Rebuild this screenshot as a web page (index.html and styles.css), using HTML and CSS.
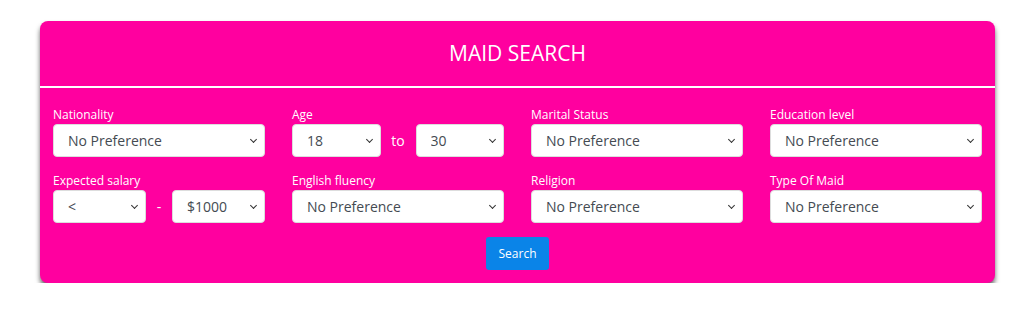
FILE: index.html
```html
<!DOCTYPE html>
<html lang="en">
<head>
    <meta charset="UTF-8">
    <title>Maid Search</title>
    <link rel="stylesheet" href="styles.css">
</head>
<body>
    <div class="search-panel">
        <h1 class="panel-title">MAID SEARCH</h1>
        <form class="search-form">
            <div class="field-grid">
                <!-- Row 1 -->
                <div class="field">
                    <label>Nationality</label>
                    <div class="select-wrap">
                        <select><option>No Preference</option></select>
                    </div>
                </div>
                <div class="field">
                    <label>Age</label>
                    <div class="range">
                        <div class="select-wrap"><select><option>18</option></select></div>
                        <span class="range-sep">to</span>
                        <div class="select-wrap"><select><option>30</option></select></div>
                    </div>
                </div>
                <div class="field">
                    <label>Marital Status</label>
                    <div class="select-wrap">
                        <select><option>No Preference</option></select>
                    </div>
                </div>
                <div class="field">
                    <label>Education level</label>
                    <div class="select-wrap">
                        <select><option>No Preference</option></select>
                    </div>
                </div>
                <!-- Row 2 -->
                <div class="field">
                    <label>Expected salary</label>
                    <div class="range">
                        <div class="select-wrap"><select><option>&lt;</option></select></div>
                        <span class="range-sep dash">-</span>
                        <div class="select-wrap"><select><option>$1000</option></select></div>
                    </div>
                </div>
                <div class="field">
                    <label>English fluency</label>
                    <div class="select-wrap">
                        <select><option>No Preference</option></select>
                    </div>
                </div>
                <div class="field">
                    <label>Religion</label>
                    <div class="select-wrap">
                        <select><option>No Preference</option></select>
                    </div>
                </div>
                <div class="field">
                    <label>Type Of Maid</label>
                    <div class="select-wrap">
                        <select><option>No Preference</option></select>
                    </div>
                </div>
            </div>
            <div class="actions">
                <button type="button" class="search-btn">Search</button>
            </div>
        </form>
    </div>
</body>
</html>
```

FILE: styles.css
```css
/* Page */
body {
    margin: 0;
    padding: 21px 29px 0 40px;
    font-family: "Open Sans", Arial, sans-serif;
    background: #fff;
}
.search-panel {
    width: 955px;
    background-color: #ff009f;
    border-radius: 8px;
    box-shadow: 0 4px 5px rgba(0, 0, 0, 0.6);
    color: #fff;
}
.panel-title {
    margin: 0;
    height: 65px;
    line-height: 64px;
    text-align: center;
    font-size: 21px;
    font-weight: 400;
    border-bottom: 2px solid #fff;
}
.search-form {
    padding: 19px 13px 13px;
}
.field-grid {
    display: grid;
    grid-template-columns: repeat(4, 1fr);
    column-gap: 27px;
    row-gap: 16px;
}
.field label {
    display: block;
    font-size: 12px;
    line-height: 16px;
    margin-bottom: 1px;
}
.select-wrap {
    position: relative;
}
.select-wrap::after {
    content: "";
    position: absolute;
    right: 9px;
    top: 13px;
    width: 4px;
    height: 4px;
    border-right: 1.6px solid #333;
    border-bottom: 1.6px solid #333;
    transform: rotate(45deg);
    pointer-events: none;
}
select {
    display: block;
    width: 100%;
    height: 33px;
    padding: 0 20px 0 14px;
    border: 1px solid #ddd;
    border-radius: 4px;
    background: #fff;
    color: #444b52;
    font-family: "Open Sans", Arial, sans-serif;
    font-size: 14px;
    -webkit-appearance: none;
    appearance: none;
}
.range {
    display: flex;
    align-items: center;
}
.range .select-wrap {
    flex: 1;
}
.range-sep {
    width: 35px;
    text-align: center;
    font-size: 14px;
}
.range-sep.dash {
    width: 26px;
}
.actions {
    display: flex;
    justify-content: center;
    margin-top: 14px;
}
.search-btn {
    width: 63px;
    height: 33px;
    border: none;
    border-radius: 3px;
    background-color: #0a84e8;
    color: #fff;
    font-family: "Open Sans", Arial, sans-serif;
    font-size: 12px;
    cursor: pointer;
}
```
